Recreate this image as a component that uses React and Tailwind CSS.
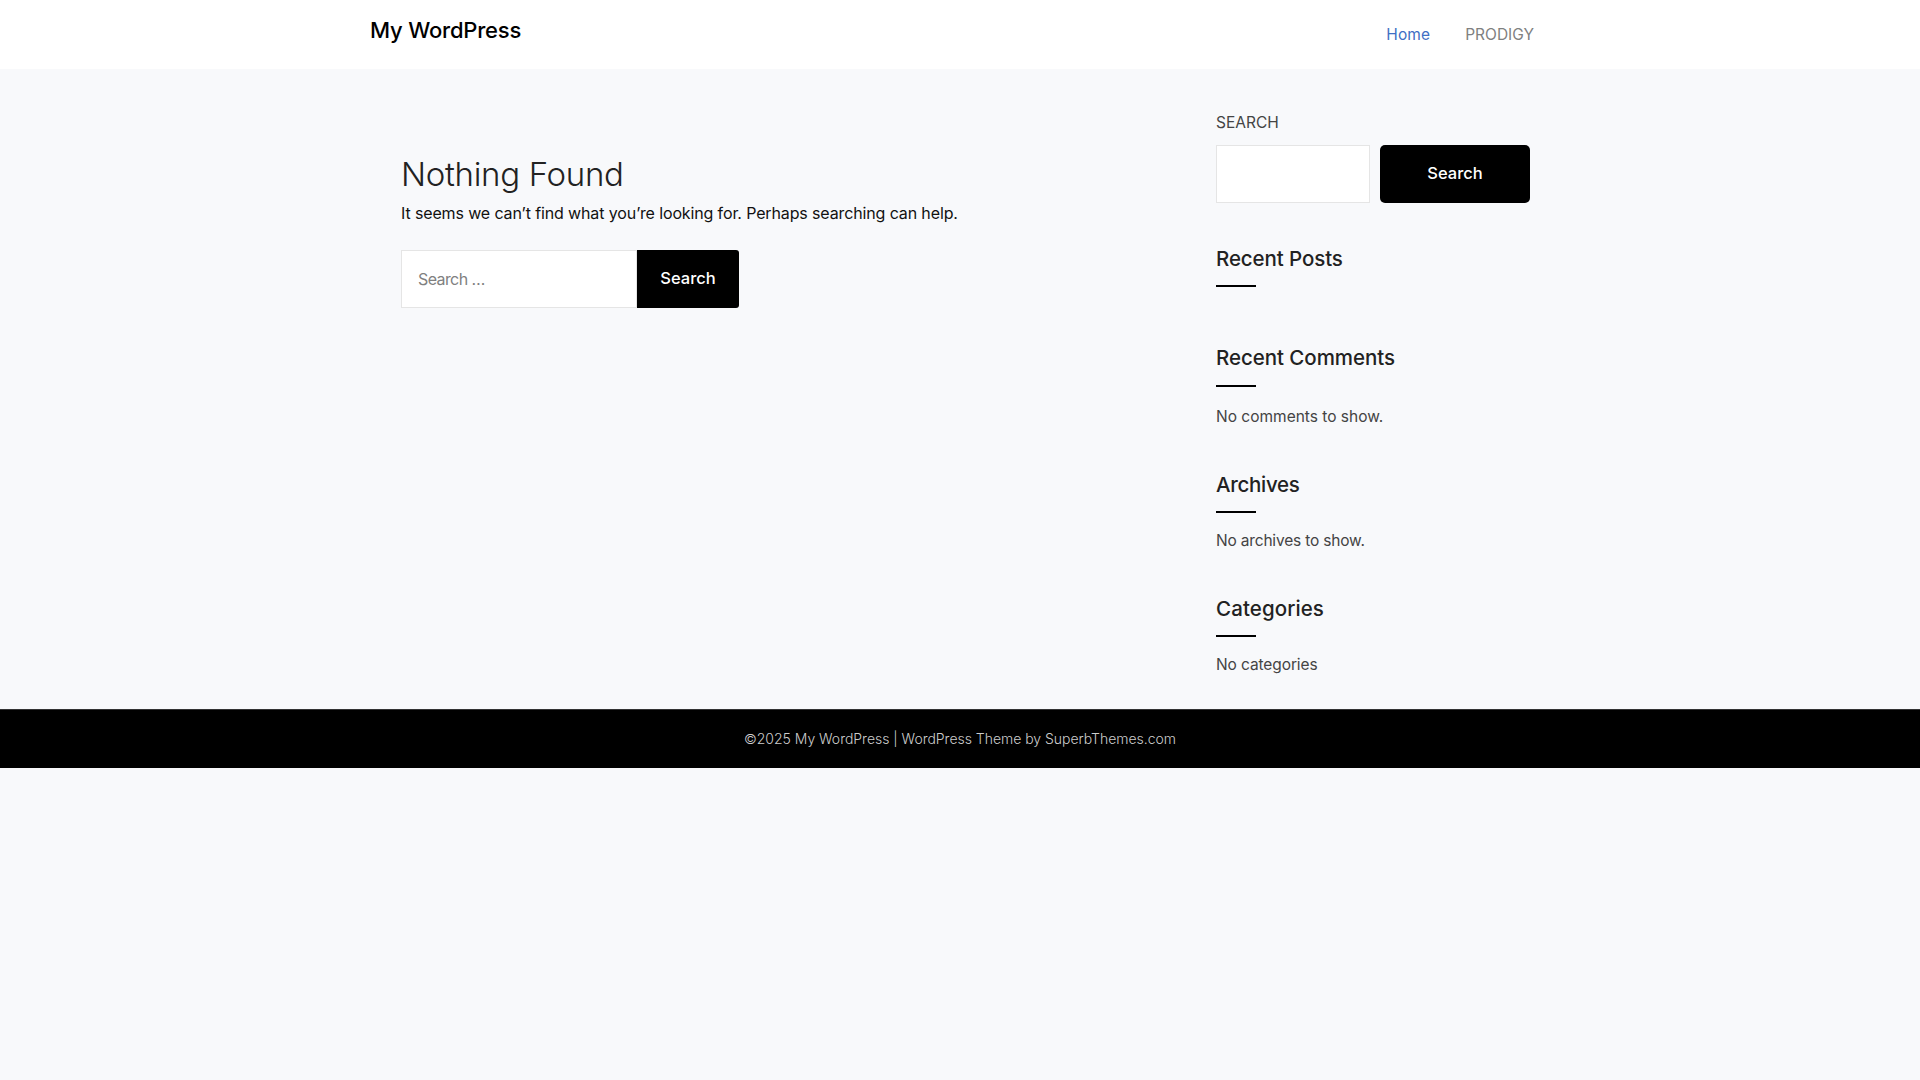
function Widget({ title, text, className, titleClass, barClass, textClass }) {
  return (
    <section className={className}>
      <h2 className={"text-[20.5px] leading-[30px] font-medium text-[#222222] " + titleClass}>{title}</h2>
      <div className={"w-10 h-0.5 bg-black " + barClass} />
      {text && <p className={"text-[15.5px] leading-6 text-[#444444] " + textClass}>{text}</p>}
    </section>
  );
}

export default function App() {
  return (
    <div className="min-h-[1080px] bg-[#f8f9fb] font-['Inter','Liberation_Sans',sans-serif]">
      <header className="h-[69px] bg-white">
        <div className="w-[1180px] mx-auto flex items-start justify-between">
          <a className="mt-[15px] text-[22px] leading-[30px] font-medium text-black tracking-[-0.2px]">My WordPress</a>
          <nav className="mt-[23px] mr-[16px] flex gap-[35px] text-[15.5px] leading-6">
            <a className="text-[#3f6fc4] tracking-[0.1px]">Home</a>
            <a className="text-[#808080]">PRODIGY</a>
          </nav>
        </div>
      </header>
      <div className="w-[1180px] mx-auto flex justify-between">
        <main className="ml-[31px] pt-[83px] w-[560px]">
          <h1 className="text-[33px] leading-[44px] font-light text-[#222222] tracking-[-0.3px]">Nothing Found</h1>
          <p className="mt-[5px] text-[16px] leading-6 text-[#111111] tracking-[-0.13px] whitespace-nowrap">It seems we can’t find what you’re looking for. Perhaps searching can help.</p>
          <form className="mt-[25px] flex">
            <div className="w-[236px] h-[58px] bg-white border border-[#e5e5e5] pl-[16px] pb-px flex items-center text-[16px] text-[#808080] tracking-[-0.6px]">Search …</div>
            <button className="w-[102px] h-[58px] pb-px bg-black text-white text-[16.5px] font-medium rounded-r-[3px]">Search</button>
          </form>
        </main>
        <aside className="w-[334px] pt-[42px]">
          <div className="text-[15.5px] leading-6 text-[#444444]">SEARCH</div>
          <div className="mt-[10px] flex gap-[10px]">
            <div className="w-[154px] h-[58px] bg-white border border-[#e5e5e5]" />
            <button className="w-[150px] h-[58px] pb-px bg-black text-white text-[16.5px] font-medium rounded-[5px]">Search</button>
          </div>
          <Widget className="mt-[41px]" title="Recent Posts" titleClass="tracking-[-0.1px]" barClass="mt-[11px]" />
          <Widget className="mt-[56px]" title="Recent Comments" titleClass="tracking-[-0.05px]" barClass="mt-[12px]" textClass="mt-[18px]" text="No comments to show." />
          <Widget className="mt-[41px]" title="Archives" titleClass="tracking-[-0.3px]" barClass="mt-[11px]" textClass="mt-[16px] tracking-[-0.18px]" text="No archives to show." />
          <Widget className="mt-[41px]" title="Categories" titleClass="tracking-[0.1px]" barClass="mt-[11px]" textClass="mt-[16px] tracking-[-0.1px]" text="No categories" />
          <div className="h-[32px]" />
        </aside>
      </div>
      <footer className="h-[59px] pb-px bg-black border-t border-[#333333] flex items-center justify-center text-[14px] font-light text-[#cccccc] tracking-[-0.02px]">
        ©2025 My WordPress | WordPress Theme by SuperbThemes.com
      </footer>
    </div>
  );
}
